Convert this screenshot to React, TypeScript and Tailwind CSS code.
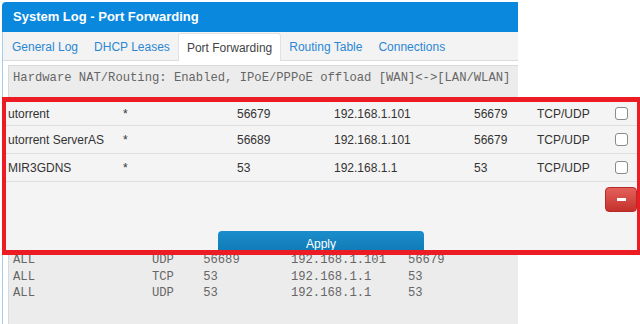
import React from 'react';

const mono = { fontFamily: '"Liberation Mono", "Courier New", monospace' };

function line(a: string, b = '', c = '', d = '', e = '') {
  return a.padEnd(19) + b.padEnd(7) + c.padEnd(12) + d.padEnd(16) + e;
}

// lines under the overlay are left blank, only the last rows show
const logLines = [
  ...Array(10).fill(''),
  line('ALL', 'UDP', '56689', '192.168.1.101', '56679'),
  line('ALL', 'TCP', '53', '192.168.1.1', '53'),
  line('ALL', 'UDP', '53', '192.168.1.1', '53'),
  '',
  '',
];

const tabs = ['General Log', 'DHCP Leases', 'Port Forwarding', 'Routing Table', 'Connections'];

const rules = [
  { name: 'utorrent', src: '*', port: '56679', ip: '192.168.1.101', lport: '56679', proto: 'TCP/UDP' },
  { name: 'utorrent ServerAS', src: '*', port: '56689', ip: '192.168.1.101', lport: '56679', proto: 'TCP/UDP' },
  { name: 'MIR3GDNS', src: '*', port: '53', ip: '192.168.1.1', lport: '53', proto: 'TCP/UDP' },
];

function LogPanel() {
  return (
    <div className="ml-[2px] mt-[2px] w-[516px] h-[322px] flex flex-col">
      <div className="h-[30px] shrink-0 bg-[#0a88de] rounded-tl-[4px] flex items-center pl-[11px] text-white font-bold text-[13px]">
        System Log - Port Forwarding
      </div>
      <div className="flex-1 flex flex-col border-l border-[#9fd0f0] bg-white">
        <div className="h-[29px] shrink-0 bg-[#f3f3f3] border-b border-[#dcdcdc] flex items-end pl-px">
          {tabs.map((t) => (
            <div
              key={t}
              className={
                t === 'Port Forwarding'
                  ? 'h-[28px] -mb-px px-2 flex items-center bg-white border-x border-t border-[#e2e2e2] rounded-t-[3px] text-[#444] text-[12px]'
                  : 'h-[27px] px-2 flex items-center text-[#2b87d3] text-[12px]'
              }
            >
              {t}
            </div>
          ))}
        </div>
        <div className="flex-1 pt-[4px] pl-[5px] bg-white flex flex-col">
          <div
            className="flex-1 bg-[#ececec] border-t border-l border-[#dadada] pt-[4px] pl-[4px] text-[12.2px] leading-[16.3px] text-[#666] whitespace-pre overflow-hidden"
            style={mono}
          >
            <div>Hardware NAT/Routing: Enabled, IPoE/PPPoE offload [WAN]&lt;-&gt;[LAN/WLAN]</div>
            <div className="mt-[3px]">
              {logLines.map((l, i) => (
                <div key={i} className="h-[16.3px]">{l}</div>
              ))}
            </div>
          </div>
        </div>
      </div>
    </div>
  );
}

function RulesOverlay() {
  return (
    <div className="absolute left-[2px] top-[97px] w-[638px] h-[158px] border-[5px] border-l-4 border-r-[3px] border-[#ec1c24] bg-[#f4f4f4] overflow-hidden text-[12px] text-[#333]">
      {rules.map((r, i) => (
        <div
          key={r.name}
          className={
            (i === 0 ? 'h-[24px] ' : 'h-[28px] ') +
            'grid grid-cols-[115px_114px_97px_140px_63px_78px_13px] items-center pl-[2px] border-b border-[#dedede]'
          }
        >
          <span>{r.name}</span>
          <span>{r.src}</span>
          <span>{r.port}</span>
          <span>{r.ip}</span>
          <span>{r.lport}</span>
          <span>{r.proto}</span>
          <span className="w-[13px] h-[13px] rounded-[3px] border border-[#8a8a8a] bg-white" />
        </div>
      ))}
      <div className="flex justify-end mt-[5px]">
        <div className="w-[32px] h-[25px] rounded-[4px] border border-[#b52a26] bg-gradient-to-b from-[#e4605a] to-[#c4302c] flex items-center justify-center">
          <div className="w-[9px] h-[3px] bg-white" />
        </div>
      </div>
      <div className="ml-[212px] mt-[19px] w-[206px] h-[25px] rounded-t-[4px] bg-gradient-to-b from-[#1b8dcc] to-[#0d77b1] text-white flex items-center justify-center">
        Apply
      </div>
    </div>
  );
}

export default function App() {
  return (
    <div
      className="relative w-[640px] h-[324px] bg-white overflow-hidden"
      style={{ fontFamily: '"Liberation Sans", Arial, sans-serif' }}
    >
      <LogPanel />
      <RulesOverlay />
    </div>
  );
}
